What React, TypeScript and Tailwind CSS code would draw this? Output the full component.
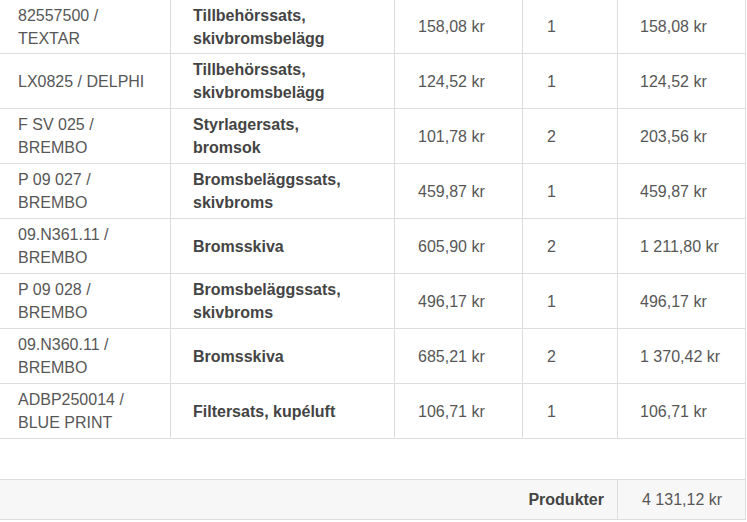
import React from 'react'

type Row = {
  ref: string
  name: string
  price: string
  qty: number
  total: string
}

const rows: Row[] = [
  { ref: '82557500 / TEXTAR', name: 'Tillbehörssats, skivbromsbelägg', price: '158,08 kr', qty: 1, total: '158,08 kr' },
  { ref: 'LX0825 / DELPHI', name: 'Tillbehörssats, skivbromsbelägg', price: '124,52 kr', qty: 1, total: '124,52 kr' },
  { ref: 'F SV 025 / BREMBO', name: 'Styrlagersats, bromsok', price: '101,78 kr', qty: 2, total: '203,56 kr' },
  { ref: 'P 09 027 / BREMBO', name: 'Bromsbeläggssats, skivbroms', price: '459,87 kr', qty: 1, total: '459,87 kr' },
  { ref: '09.N361.11 / BREMBO', name: 'Bromsskiva', price: '605,90 kr', qty: 2, total: '1 211,80 kr' },
  { ref: 'P 09 028 / BREMBO', name: 'Bromsbeläggssats, skivbroms', price: '496,17 kr', qty: 1, total: '496,17 kr' },
  { ref: '09.N360.11 / BREMBO', name: 'Bromsskiva', price: '685,21 kr', qty: 2, total: '1 370,42 kr' },
  { ref: 'ADBP250014 / BLUE PRINT', name: 'Filtersats, kupéluft', price: '106,71 kr', qty: 1, total: '106,71 kr' },
]

export default function App() {
  return (
    <div className="w-[747px] h-[522px] overflow-hidden bg-white font-['Liberation_Sans',Arial,sans-serif] text-[16px] leading-[23px] text-[#575757]">
      <div className="w-[746px] border-r border-[#ddd]">
        {/* Order lines */}
        {rows.map((r, i) => (
          <div
            key={i}
            className={`flex border-b border-[#ddd] ${i === 0 ? 'h-[54px]' : 'h-[55px]'}`}
          >
            <div className="w-[170px] shrink-0 flex items-center pl-[18px]">
              <span className="w-[138px]">{r.ref}</span>
            </div>
            <div className="w-[224px] shrink-0 flex items-center border-l border-[#ddd] pl-[22px]">
              <span className="w-[165px] font-bold text-[#444]">{r.name}</span>
            </div>
            <div className="w-[128px] shrink-0 flex items-center border-l border-[#ddd] pl-[23px]">
              {r.price}
            </div>
            <div className="w-[95px] shrink-0 flex items-center border-l border-[#ddd] pl-[24px]">
              {r.qty}
            </div>
            <div className="flex-1 flex items-center border-l border-[#ddd] pl-[22px]">
              {r.total}
            </div>
          </div>
        ))}

        {/* Spacer row */}
        <div className="h-[41px] border-b border-[#ddd]" />

        {/* Summary */}
        <div className="flex h-[40px] border-b border-[#ddd] bg-[#f7f7f7]">
          <div className="w-[617px] shrink-0 flex items-center justify-end pr-[13px] font-bold text-[#444]">
            Produkter
          </div>
          <div className="flex-1 flex items-center border-l border-[#ddd] pl-[24px]">
            4 131,12 kr
          </div>
        </div>
      </div>
    </div>
  )
}
